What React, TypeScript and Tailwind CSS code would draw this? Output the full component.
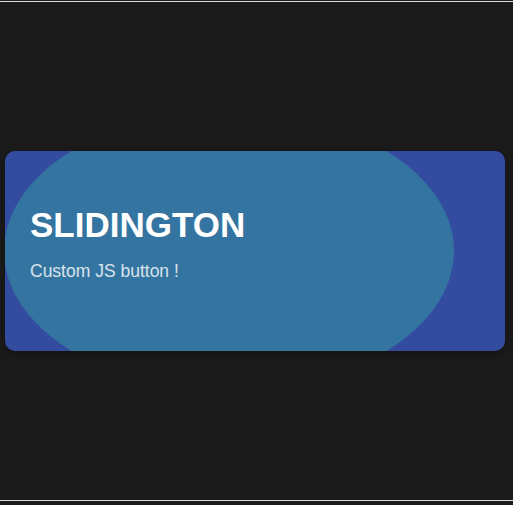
import React from "react";

export default function App() {
  return (
    <div className="min-h-screen bg-[#1b1b1b] pt-[1px]" style={{ fontFamily: '"Liberation Sans", Arial, sans-serif' }}>
      <div className="h-[500px] border-y border-[#dcdcdc] flex items-center">
        <div className="relative ml-[5px] w-[500px] h-[200px] rounded-[10px] overflow-hidden bg-[#344ca0] shadow-[0_3px_10px_rgba(0,0,0,0.35)]">
          <div className="absolute left-[-1px] top-[-40px] w-[450px] h-[280px] rounded-[50%] bg-[#3474a0]" />
          <div className="relative flex flex-col pl-[25px] pt-[56.4px]">
            <h1 className="text-[35px] leading-none font-bold text-white">SLIDINGTON</h1>
            <p className="mt-[20.8px] text-[17.5px] leading-none text-white/80">Custom JS button !</p>
          </div>
        </div>
      </div>
    </div>
  );
}
